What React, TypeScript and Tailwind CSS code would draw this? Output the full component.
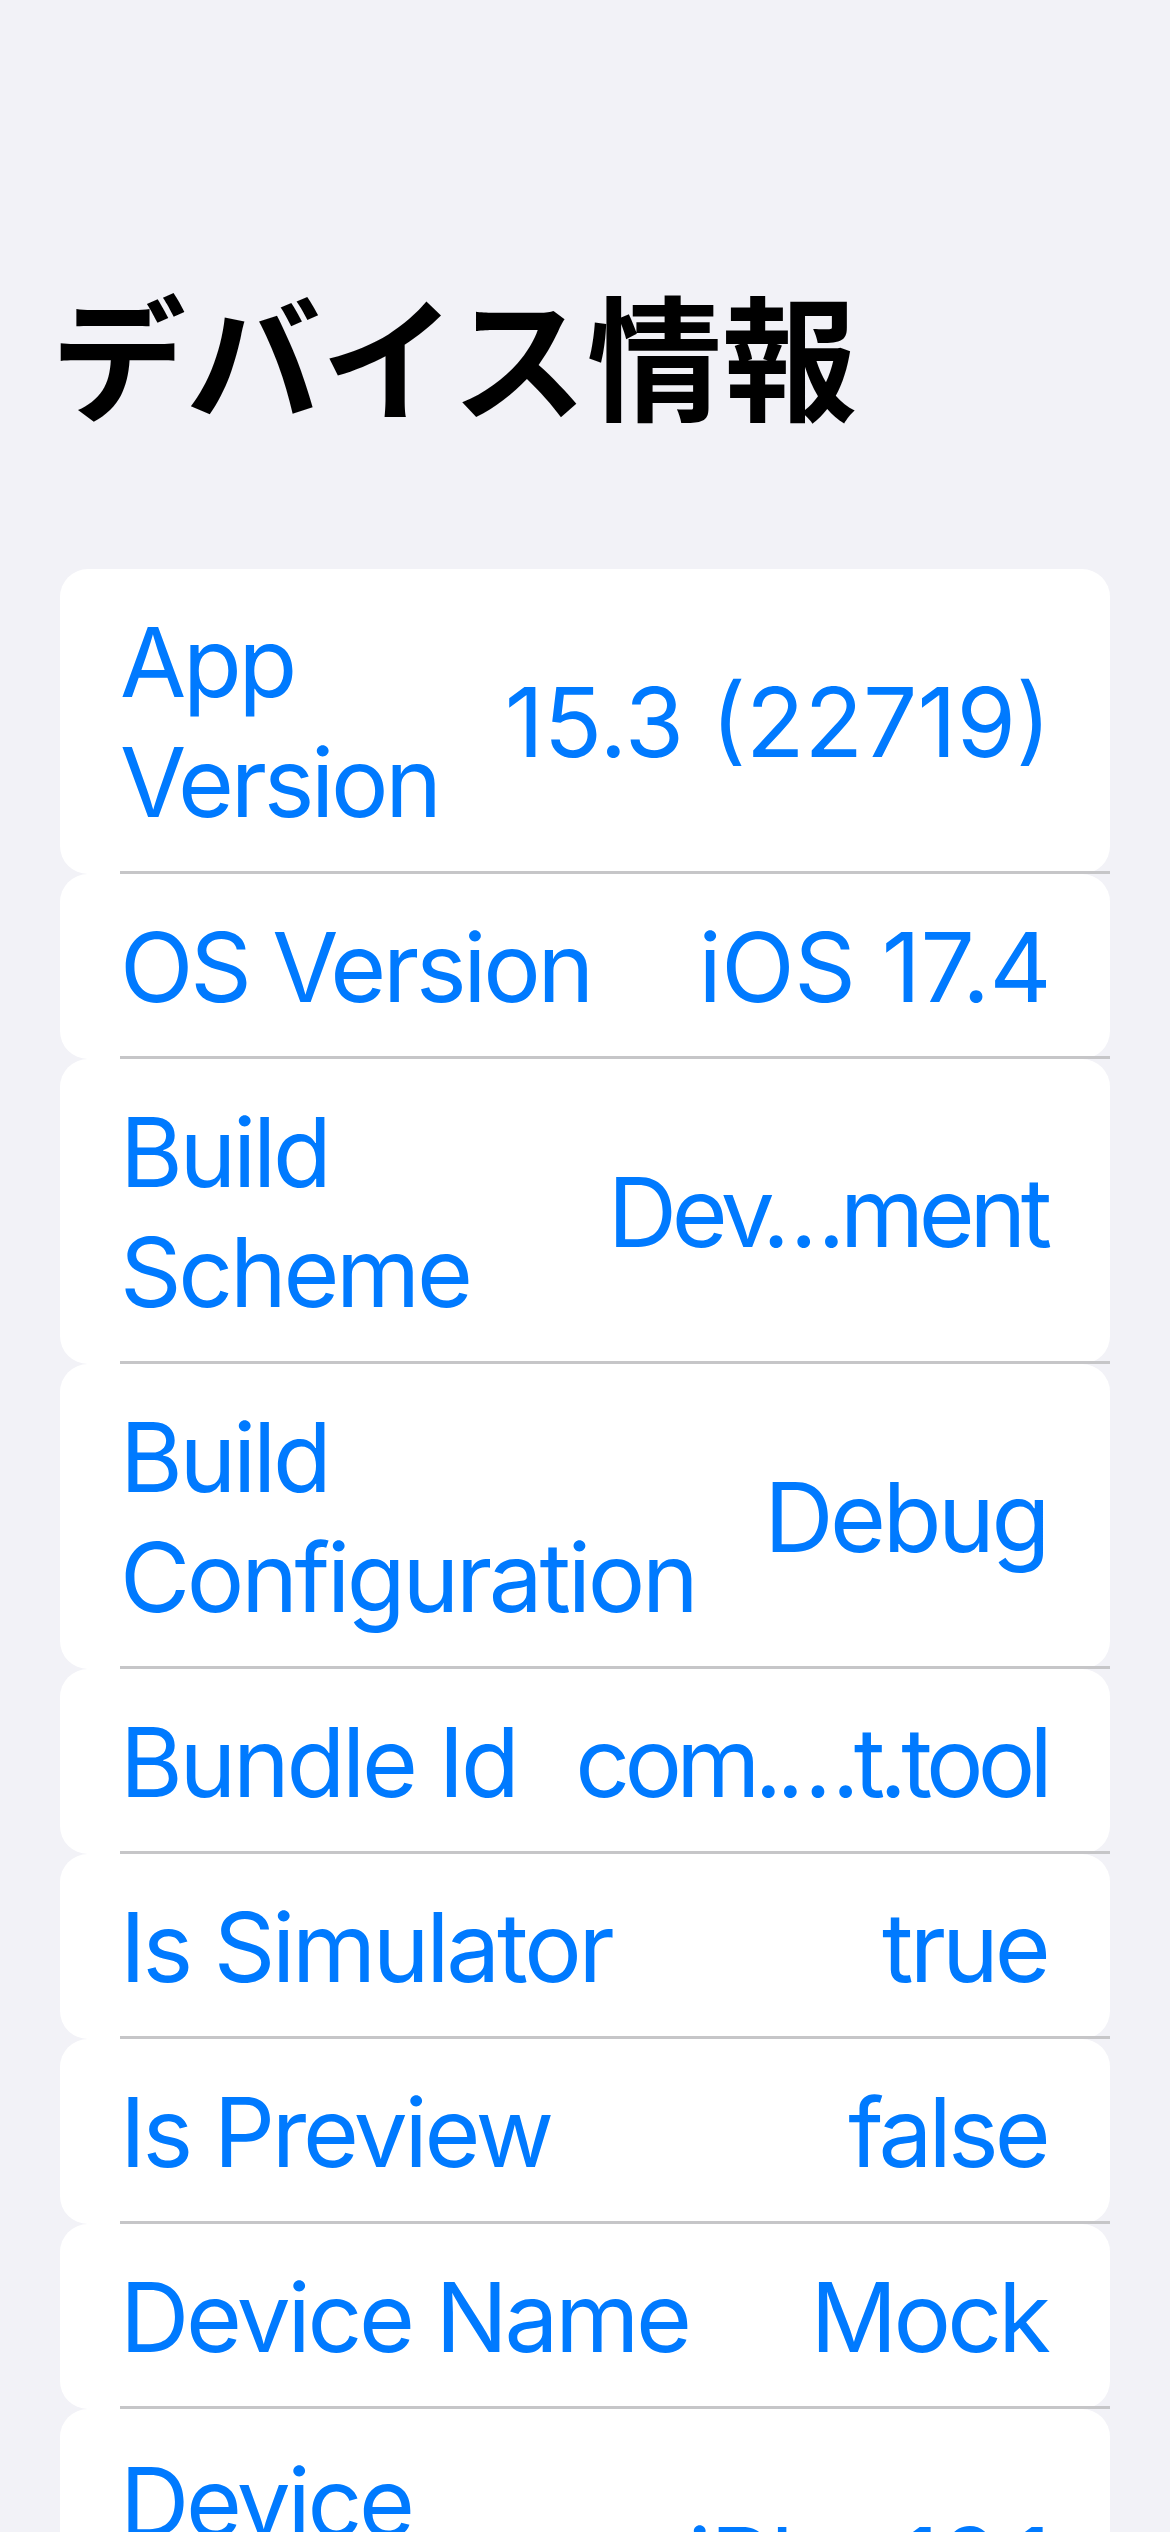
import React from "react";

interface Row {
  label: string[];
  value: string;
  valueTracking: string;
}

const rows: Row[] = [
  { label: ["App", "Version"], value: "15.3 (22719)", valueTracking: "tracking-[0em] -mr-[4px]" },
  { label: ["OS Version"], value: "iOS 17.4", valueTracking: "tracking-[-0.005em] -mr-[4px]" },
  { label: ["Build", "Scheme"], value: "Dev…ment", valueTracking: "tracking-[-0.055em]" },
  { label: ["Build", "Configuration"], value: "Debug", valueTracking: "tracking-[-0.035em]" },
  { label: ["Bundle Id"], value: "com.…t.tool", valueTracking: "tracking-[-0.06em]" },
  { label: ["Is Simulator"], value: "true", valueTracking: "tracking-[-0.04em]" },
  { label: ["Is Preview"], value: "false", valueTracking: "tracking-[-0.04em]" },
  { label: ["Device Name"], value: "Mock", valueTracking: "tracking-[-0.04em]" },
  { label: ["Device", "Model"], value: "iPh…16,1", valueTracking: "tracking-[-0.01em] -mr-[3px]" },
];

const InfoRow = ({ row }: { row: Row }) => {
  return (
    <div className="relative flex items-center justify-between gap-6 rounded-[28px] bg-white py-[32.5px] pl-[60px] pr-[63px]">
      <div className="flex shrink-0 flex-col tracking-[-0.034em]">
        {row.label.map((line) => (
          <span key={line} className="whitespace-nowrap">
            {line}
          </span>
        ))}
      </div>
      <span className={"min-w-0 whitespace-nowrap text-right " + row.valueTracking}>{row.value}</span>
      <div className="absolute bottom-0 left-[60px] right-0 h-[3px] bg-[#c6c6c8]" />
    </div>
  );
};

const App = () => {
  return (
    <div className="h-[2532px] w-full overflow-hidden bg-[#f2f2f7] px-[60px]">
      <h1
        className="-ml-[9px] pt-[285px] text-[135px] font-bold leading-none text-black"
        style={{ fontFamily: '"Noto Sans CJK JP", sans-serif' }}
      >
        デバイス情報
      </h1>
      <div
        className="mt-[149px] flex flex-col text-[96px] leading-[120px] text-[#007aff]"
        style={{ fontFamily: "Inter, sans-serif" }}
      >
        {rows.map((row) => (
          <InfoRow key={row.label.join(" ")} row={row} />
        ))}
      </div>
    </div>
  );
};

export default App;
